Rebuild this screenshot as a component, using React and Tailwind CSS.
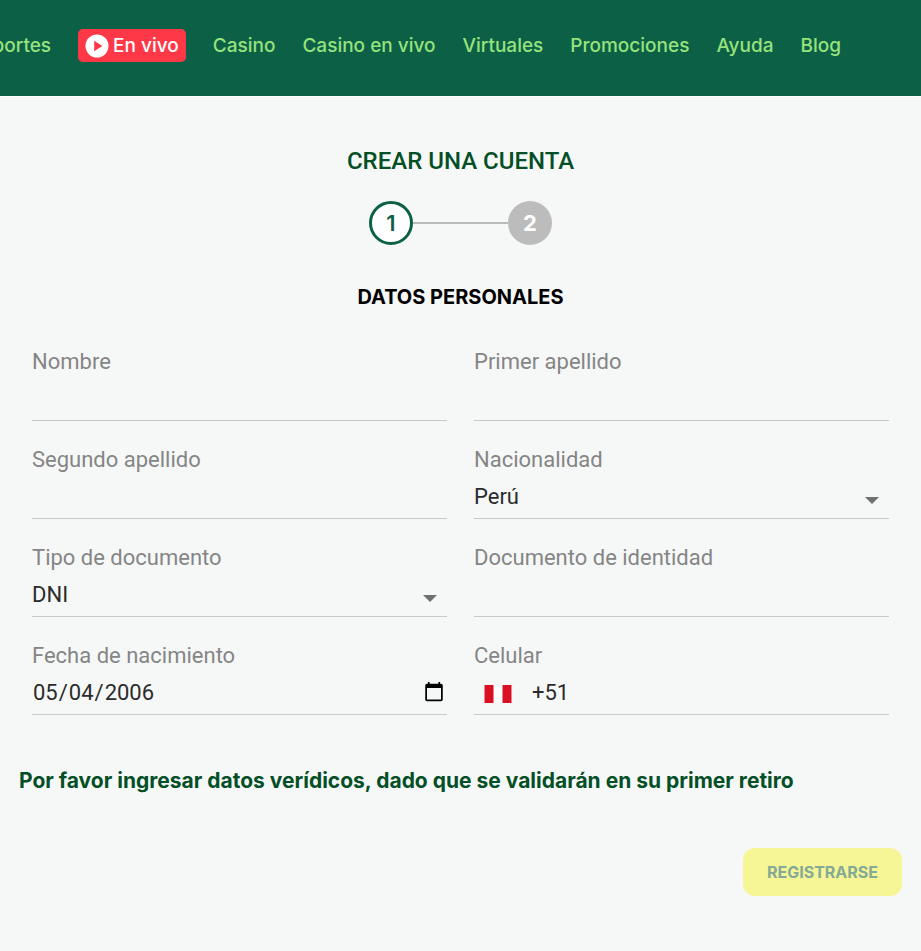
import { useState } from 'react'

const NAV_LINKS = ['Casino', 'Casino en vivo', 'Virtuales', 'Promociones', 'Ayuda', 'Blog']

const controlClass = 'h-11 w-full min-w-0 bg-transparent font-[Roboto,sans-serif] text-[22px] text-[#2b2b2b] outline-none'

export default function App() {
  const [form, setForm] = useState({
    firstName: '',
    lastName: '',
    secondLastName: '',
    nationality: 'Perú',
    documentType: 'DNI',
    documentNumber: '',
    birthDate: '2006-05-04',
    phone: '+51',
  })

  function handleChange(event) {
    const { name, value } = event.target
    setForm((current) => ({ ...current, [name]: value }))
  }

  return (
    <div className="min-h-screen bg-[#f6f8f8] font-[Inter,sans-serif]">
      <header className="border-b border-white bg-[#0b6046]">
        <nav className="flex h-24 items-center justify-end gap-[27px] overflow-hidden pr-20 pb-[5px] text-[19px] leading-7 font-medium whitespace-nowrap text-[#97e27c]">
          <a href="#deportes">Deportes</a>
          <a href="#en-vivo" className="flex h-[33px] items-center gap-1 rounded-[5px] bg-[#ff3848] px-[7px] text-white">
            <PlayIcon />
            En vivo
          </a>
          {NAV_LINKS.map((label) => (
            <a key={label} href={`#${label.toLowerCase().replaceAll(' ', '-')}`}>
              {label}
            </a>
          ))}
        </nav>
      </header>

      <main className="pt-12 pb-10">
        <h1 className="text-center font-[Roboto,sans-serif] text-[24px] leading-8 font-medium text-[#044f26]">CREAR UNA CUENTA</h1>

        <ol className="mt-6 flex items-center justify-center text-[22px] font-bold">
          <li className="flex size-11 items-center justify-center rounded-full border-3 border-[#0b6046] bg-white font-semibold text-[#0b6046]">
            1
          </li>
          <li aria-hidden="true" className="h-0.5 w-[95px] bg-[#b9b9b9]" />
          <li className="flex size-11 items-center justify-center rounded-full bg-[#bcbcbc] text-white">2</li>
        </ol>

        <h2 className="mt-[38px] text-center text-[20px] leading-7 font-bold text-black">DATOS PERSONALES</h2>

        <form onSubmit={(event) => event.preventDefault()}>
          <div className="mt-[37px] grid grid-cols-2 gap-x-[27px] gap-y-[25px] px-8">
            <Field id="firstName" label="Nombre">
              <input id="firstName" name="firstName" type="text" value={form.firstName} onChange={handleChange} className={controlClass} />
            </Field>
            <Field id="lastName" label="Primer apellido">
              <input id="lastName" name="lastName" type="text" value={form.lastName} onChange={handleChange} className={controlClass} />
            </Field>
            <Field id="secondLastName" label="Segundo apellido">
              <input
                id="secondLastName"
                name="secondLastName"
                type="text"
                value={form.secondLastName}
                onChange={handleChange}
                className={controlClass}
              />
            </Field>
            <Field id="nationality" label="Nacionalidad">
              <Select id="nationality" value={form.nationality} onChange={handleChange} options={['Perú', 'Argentina', 'Chile']} />
            </Field>
            <Field id="documentType" label="Tipo de documento">
              <Select id="documentType" value={form.documentType} onChange={handleChange} options={['DNI', 'Pasaporte']} />
            </Field>
            <Field id="documentNumber" label="Documento de identidad">
              <input
                id="documentNumber"
                name="documentNumber"
                type="text"
                value={form.documentNumber}
                onChange={handleChange}
                className={controlClass}
              />
            </Field>
            <Field id="birthDate" label="Fecha de nacimiento">
              <input id="birthDate" name="birthDate" type="date" value={form.birthDate} onChange={handleChange} className={controlClass} />
            </Field>
            <Field id="phone" label="Celular">
              <PeruFlag />
              <input id="phone" name="phone" type="tel" value={form.phone} onChange={handleChange} className={controlClass} />
            </Field>
          </div>

          <p className="mt-[52px] px-[19px] text-[21px] leading-7 font-bold text-[#044f26]">
            Por favor ingresar datos verídicos, dado que se validarán en su primer retiro
          </p>

          <div className="mt-[53px] flex justify-end px-[19px]">
            <button type="submit" disabled className="h-12 rounded-xl bg-[#f7f696] px-6 text-[16px] font-bold text-[#84aa95]">
              REGISTRARSE
            </button>
          </div>
        </form>
      </main>
    </div>
  )
}

function Field({ id, label, children }) {
  return (
    <div className="border-b border-[#c6cac9]">
      <label htmlFor={id} className="block font-[Roboto,sans-serif] text-[22px] leading-7 text-[#858585]">
        {label}
      </label>
      <div className="flex h-11 items-center">{children}</div>
    </div>
  )
}

function Select({ id, value, onChange, options }) {
  return (
    <div className="relative w-full">
      <select id={id} name={id} value={value} onChange={onChange} className={`${controlClass} appearance-none`}>
        {options.map((option) => (
          <option key={option}>{option}</option>
        ))}
      </select>
      <svg viewBox="0 0 14 7" className="pointer-events-none absolute top-[23px] right-2.5 h-[7px] w-3.5 fill-[#707070]" aria-hidden="true">
        <path d="M0 0h14L7 7z" />
      </svg>
    </div>
  )
}

function PlayIcon() {
  return (
    <svg viewBox="0 0 24 24" className="size-6" aria-hidden="true">
      <circle cx="12" cy="12" r="11.5" fill="#fff" />
      <path d="M9.2 6.8v10.4l8.2-5.2z" fill="#ff3848" />
    </svg>
  )
}

function PeruFlag() {
  return (
    <svg viewBox="0 0 27 18" className="mt-1 mr-5 ml-2.5 h-[18px] w-7 shrink-0" aria-hidden="true">
      <path d="M0 0h27v18H0z" fill="#fff" />
      <path d="M0 0h9v18H0zM18 0h9v18h-9z" fill="#d91023" />
    </svg>
  )
}
